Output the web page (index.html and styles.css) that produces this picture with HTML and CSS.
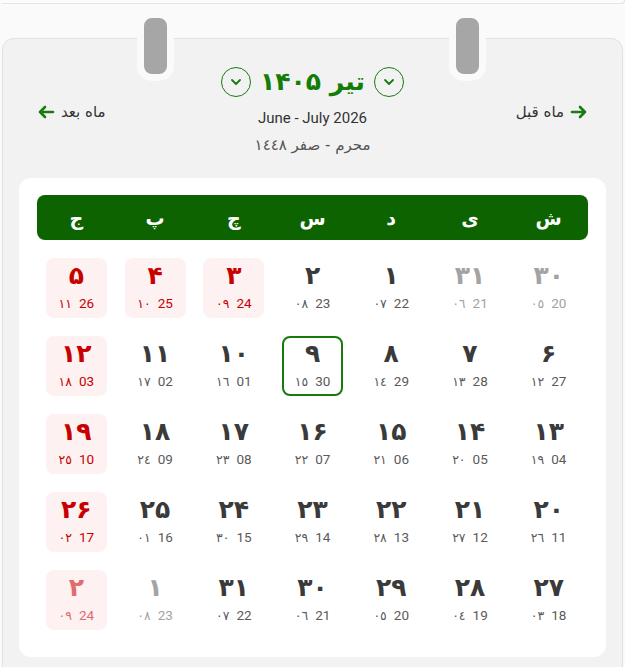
FILE: index.html
```html
<!DOCTYPE html>
<html lang="fa" dir="rtl">
<head>
<meta charset="utf-8">
<link rel="stylesheet" href="styles.css">
</head>
<body>
<div class="topstrip"></div>
<div class="card">
  <span class="ring ring-right"></span>
  <span class="ring ring-left"></span>
  <div class="title-row">
    <span class="chev"><svg width="12" height="8" viewBox="0 0 12 8"><path d="M2 2 L6 6 L10 2" fill="none" stroke="#1a7a10" stroke-width="1.8" stroke-linecap="round" stroke-linejoin="round"/></svg></span>
    <h1 class="title">تیر ۱۴۰۵</h1>
    <span class="chev"><svg width="12" height="8" viewBox="0 0 12 8"><path d="M2 2 L6 6 L10 2" fill="none" stroke="#1a7a10" stroke-width="1.8" stroke-linecap="round" stroke-linejoin="round"/></svg></span>
  </div>
  <div class="sub-row">
    <div class="nav nav-prev">
      <svg class="arrow" width="18" height="14" viewBox="0 0 18 14"><path d="M2 7 H15 M10 2 L15 7 L10 12" fill="none" stroke="#1b7a12" stroke-width="2.6" stroke-linecap="round" stroke-linejoin="round"/></svg>
      <span>ماه قبل</span>
    </div>
    <div class="center">
      <div class="greg" dir="ltr">June - July 2026</div>
      <div class="hijri">محرم - صفر ١٤٤٨</div>
    </div>
    <div class="nav nav-next">
      <span>ماه بعد</span>
      <svg class="arrow" width="18" height="14" viewBox="0 0 18 14"><path d="M16 7 H3 M8 2 L3 7 L8 12" fill="none" stroke="#1b7a12" stroke-width="2.6" stroke-linecap="round" stroke-linejoin="round"/></svg>
    </div>
  </div>
  <div class="panel">
    <div class="weekdays">
      <span>ش</span><span>ی</span><span>د</span><span>س</span><span>چ</span><span>پ</span><span>ج</span>
    </div>
    <div class="grid">
      <div class="cell muted"><b>۳۰</b><small><i>20</i><em>٠٥</em></small></div>
      <div class="cell muted"><b>۳۱</b><small><i>21</i><em>٠٦</em></small></div>
      <div class="cell"><b>۱</b><small><i>22</i><em>٠٧</em></small></div>
      <div class="cell"><b>۲</b><small><i>23</i><em>٠٨</em></small></div>
      <div class="cell holiday"><b>۳</b><small><i>24</i><em>٠٩</em></small></div>
      <div class="cell holiday"><b>۴</b><small><i>25</i><em>١٠</em></small></div>
      <div class="cell holiday"><b>۵</b><small><i>26</i><em>١١</em></small></div>

      <div class="cell"><b>۶</b><small><i>27</i><em>١٢</em></small></div>
      <div class="cell"><b>۷</b><small><i>28</i><em>١٣</em></small></div>
      <div class="cell"><b>۸</b><small><i>29</i><em>١٤</em></small></div>
      <div class="cell today"><b>۹</b><small><i>30</i><em>١٥</em></small></div>
      <div class="cell"><b>۱۰</b><small><i>01</i><em>١٦</em></small></div>
      <div class="cell"><b>۱۱</b><small><i>02</i><em>١٧</em></small></div>
      <div class="cell holiday"><b>۱۲</b><small><i>03</i><em>١٨</em></small></div>

      <div class="cell"><b>۱۳</b><small><i>04</i><em>١٩</em></small></div>
      <div class="cell"><b>۱۴</b><small><i>05</i><em>٢٠</em></small></div>
      <div class="cell"><b>۱۵</b><small><i>06</i><em>٢١</em></small></div>
      <div class="cell"><b>۱۶</b><small><i>07</i><em>٢٢</em></small></div>
      <div class="cell"><b>۱۷</b><small><i>08</i><em>٢٣</em></small></div>
      <div class="cell"><b>۱۸</b><small><i>09</i><em>٢٤</em></small></div>
      <div class="cell holiday"><b>۱۹</b><small><i>10</i><em>٢٥</em></small></div>

      <div class="cell"><b>۲۰</b><small><i>11</i><em>٢٦</em></small></div>
      <div class="cell"><b>۲۱</b><small><i>12</i><em>٢٧</em></small></div>
      <div class="cell"><b>۲۲</b><small><i>13</i><em>٢٨</em></small></div>
      <div class="cell"><b>۲۳</b><small><i>14</i><em>٢٩</em></small></div>
      <div class="cell"><b>۲۴</b><small><i>15</i><em>٣٠</em></small></div>
      <div class="cell"><b>۲۵</b><small><i>16</i><em>٠١</em></small></div>
      <div class="cell holiday"><b>۲۶</b><small><i>17</i><em>٠٢</em></small></div>

      <div class="cell"><b>۲۷</b><small><i>18</i><em>٠٣</em></small></div>
      <div class="cell"><b>۲۸</b><small><i>19</i><em>٠٤</em></small></div>
      <div class="cell"><b>۲۹</b><small><i>20</i><em>٠٥</em></small></div>
      <div class="cell"><b>۳۰</b><small><i>21</i><em>٠٦</em></small></div>
      <div class="cell"><b>۳۱</b><small><i>22</i><em>٠٧</em></small></div>
      <div class="cell muted"><b>۱</b><small><i>23</i><em>٠٨</em></small></div>
      <div class="cell holiday faded"><b>۲</b><small><i>24</i><em>٠٩</em></small></div>
    </div>
  </div>
</div>
</body>
</html>
```
FILE: styles.css
```css
* { box-sizing: border-box; }
html, body { margin: 0; padding: 0; }
body {
  background: #fafafa;
  font-family: "DejaVu Sans", "Noto Sans", sans-serif;
  color: #333;
  width: 625px;
  overflow: hidden;
}
.topstrip {
  height: 4px;
  width: 623px;
  margin-left: auto;
  background: #fcfcfc;
  border-bottom: 1px solid #e4e4e4;
  border-right: 1px solid #e4e4e4;
  border-bottom-right-radius: 10px;
  direction: ltr;
}
.card {
  position: relative;
  margin: 34px 2px 0 2px;
  background: #f2f2f2;
  border: 1px solid #e1e1e1;
  border-radius: 12px;
  padding: 28px 16px 30px;
}
.ring {
  position: absolute;
  top: -28px;
  width: 37px;
  height: 70px;
  background: #a6a6a6;
  border: 7px solid #fafafa;
  border-radius: 15px;
}
.ring-left { left: 134px; }
.ring-right { left: 446px; }
.title-row {
  display: flex;
  justify-content: center;
  align-items: center;
  gap: 7px;
  height: 30px;
}
.chev {
  width: 30px;
  height: 30px;
  border: 1px solid #1a7a10;
  border-radius: 50%;
  display: flex;
  align-items: center;
  justify-content: center;
}
.title {
  margin: 0;
  font-size: 25px;
  font-weight: bold;
  color: #137d08;
  line-height: 30px;
  padding: 0 2px;
}
.sub-row {
  display: grid;
  grid-template-columns: 1fr auto 1fr;
  padding: 0 18px;
}
.nav {
  display: flex;
  align-items: center;
  gap: 6px;
  margin-top: 5px;
  height: 20px;
  font-size: 15px;
  color: #333;
}
.nav-next { justify-content: flex-end; }
.center { text-align: center; }
.greg {
  margin-top: 11px;
  font-family: Roboto, "Liberation Sans", sans-serif;
  font-size: 15px;
  line-height: 20px;
  color: #333;
}
.hijri {
  margin-top: 7px;
  font-size: 15px;
  line-height: 20px;
  color: #555;
}
.panel {
  margin-top: 23px;
  background: #fff;
  border-radius: 12px;
  padding: 17px 18px 27px;
}
.weekdays {
  display: grid;
  grid-template-columns: repeat(7, 1fr);
  height: 45px;
  align-items: center;
  background: #0c6300;
  border-radius: 8px;
  color: #fff;
  font-weight: bold;
  font-size: 19px;
  text-align: center;
}
.grid {
  margin-top: 18px;
  display: grid;
  grid-template-columns: repeat(7, 1fr);
  row-gap: 18px;
  justify-items: center;
}
.cell {
  width: 61px;
  height: 60px;
  border-radius: 8px;
  display: flex;
  flex-direction: column;
  align-items: center;
  padding-top: 2px;
}
.cell b {
  font-size: 25px;
  line-height: 31px;
  font-weight: bold;
  color: #3a3a3a;
}
.cell small {
  display: flex;
  gap: 7px;
  align-items: baseline;
  margin-top: 3px;
  line-height: 18px;
  color: #5a5a5a;
}
.cell small i {
  font-style: normal;
  font-family: Roboto, "Liberation Sans", sans-serif;
  font-size: 13.5px;
}
.cell small em {
  font-style: normal;
  font-size: 12.5px;
}
.cell.muted b { color: #a3a3a3; }
.cell.muted small { color: #a3a3a3; }
.cell.holiday { background: #fdf1f1; }
.cell.holiday b, .cell.holiday small { color: #c80000; }
.cell.faded b, .cell.faded small { color: #e06c6c; }
.cell.today {
  border: 2px solid #167a0c;
  padding-top: 0;
}
```
